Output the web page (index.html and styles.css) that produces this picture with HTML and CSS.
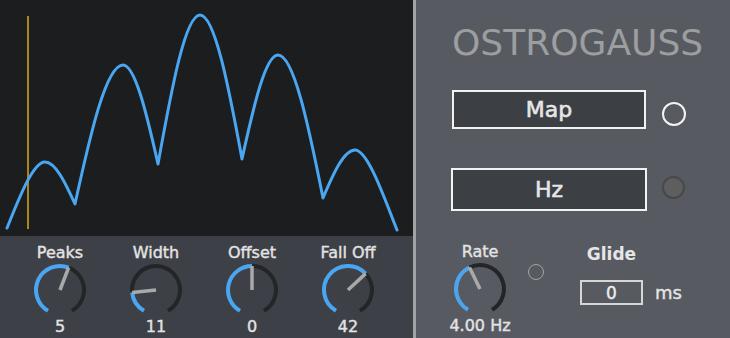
FILE: index.html
```html
<!DOCTYPE html>
<html lang="en">
<head>
    <meta charset="UTF-8">
    <meta name="viewport" content="width=device-width, initial-scale=1.0">
    <title>Ostrogauss</title>
    <link rel="stylesheet" href="styles.css">
</head>
<body>
    <div class="device">
        <div class="left">
            <!-- Gaussian peaks display -->
            <div class="scope">
                <svg width="413" height="236" viewBox="0 0 413 236">
                    <line class="playhead" x1="28" y1="16" x2="28" y2="229"/>
                    <path class="curve" d="M7 228
                        C19 198 33 162 45 162
                        C55.5 162 65.2 182.6 75 204
                        C90.6 133 106.2 65 123 65
                        C135 65 146.6 113.5 158 164
                        C171.7 88 185.3 15 200 15
                        C214.7 15 228.4 85.6 242 159
                        C253.7 106 265.4 55 278 55
                        C293.7 55 308.4 125 323 198
                        C333.4 173.5 343.8 150 355 150
                        C368 150 385 200 397 230"/>
                </svg>
            </div>

            <div class="dials">
                <div class="knob">
                    <span class="knob-label">Peaks</span>
                    <svg viewBox="0 0 56 56">
                        <path class="dial-track" d="M36.60 5.59 A24 24 0 0 1 40 48.78"/>
                        <path class="dial-value" d="M16 48.78 A24 24 0 0 1 36.60 5.59"/>
                        <line class="dial-needle" x1="28" y1="28" x2="36.60" y2="5.59"/>
                    </svg>
                    <span class="knob-value">5</span>
                </div>
                <div class="knob">
                    <span class="knob-label">Width</span>
                    <svg viewBox="0 0 56 56">
                        <path class="dial-track" d="M4.13 30.51 A24 24 0 1 1 40 48.78"/>
                        <path class="dial-value" d="M16 48.78 A24 24 0 0 1 4.13 30.51"/>
                        <line class="dial-needle" x1="28" y1="28" x2="4.13" y2="30.51"/>
                    </svg>
                    <span class="knob-value">11</span>
                </div>
                <div class="knob">
                    <span class="knob-label">Offset</span>
                    <svg viewBox="0 0 56 56">
                        <path class="dial-track" d="M28 4 A24 24 0 0 1 40 48.78"/>
                        <path class="dial-value" d="M16 48.78 A24 24 0 0 1 28 4"/>
                        <line class="dial-needle" x1="28" y1="28" x2="28" y2="4"/>
                    </svg>
                    <span class="knob-value">0</span>
                </div>
                <div class="knob">
                    <span class="knob-label">Fall Off</span>
                    <svg viewBox="0 0 56 56">
                        <path class="dial-track" d="M45.55 11.63 A24 24 0 0 1 40 48.78"/>
                        <path class="dial-value" d="M16 48.78 A24 24 0 1 1 45.55 11.63"/>
                        <line class="dial-needle" x1="28" y1="28" x2="45.55" y2="11.63"/>
                    </svg>
                    <span class="knob-value">42</span>
                </div>
            </div>
        </div>

        <div class="divider"></div>

        <div class="right">
            <h1 class="title">OSTROGAUSS</h1>

            <div class="row row-map">
                <div class="btn btn-map">Map</div>
                <span class="led led-on"></span>
            </div>

            <div class="row row-hz">
                <div class="btn btn-hz">Hz</div>
                <span class="led led-off"></span>
            </div>

            <div class="controls">
                <div class="knob rate">
                    <span class="knob-label">Rate</span>
                    <svg viewBox="0 0 56 56">
                        <path class="dial-track" d="M17.48 6.43 A24 24 0 0 1 40 48.78"/>
                        <path class="dial-value" d="M16 48.78 A24 24 0 0 1 17.48 6.43"/>
                        <line class="dial-needle" x1="28" y1="28" x2="17.48" y2="6.43"/>
                    </svg>
                    <span class="knob-value">4.00 Hz</span>
                </div>
                <span class="led-small"></span>
                <div class="glide">
                    <div class="glide-label">Glide</div>
                    <div class="glide-row">
                        <div class="glide-box">0</div>
                        <span class="glide-unit">ms</span>
                    </div>
                </div>
            </div>
        </div>
    </div>
</body>
</html>
```

FILE: styles.css
```css
/* Device layout */
body {
    margin: 0;
    background-color: #575a61;
    font-family: "DejaVu Sans", "Liberation Sans", sans-serif;
}

.device {
    display: flex;
    width: 730px;
    height: 338px;
    overflow: hidden;
}

.left {
    width: 413px;
    display: flex;
    flex-direction: column;
}

.scope {
    height: 236px;
    background-color: #1b1d1f;
}

.scope svg {
    display: block;
}

.curve {
    fill: none;
    stroke: #4ba6f2;
    stroke-width: 3;
    stroke-linejoin: round;
    stroke-linecap: round;
}

.playhead {
    stroke: #d9a91e;
    stroke-width: 1.5;
}

.divider {
    width: 3px;
    background-color: #a2a3a5;
}

/* Dials */
.dials {
    flex: 1;
    display: flex;
    gap: 16px;
    padding: 8px 0 0 20px;
    background-color: #3d4046;
}

.knob {
    width: 80px;
    display: flex;
    flex-direction: column;
    align-items: center;
    color: #e3e3e3;
    font-size: 16px;
    line-height: 18px;
    white-space: nowrap;
    -webkit-text-stroke: 0.4px currentColor;
}

.knob svg {
    display: block;
    width: 56px;
    height: 56px;
}

.dial-track,
.dial-value {
    fill: none;
    stroke-width: 4;
}

.dial-track {
    stroke: #232527;
}

.dial-value {
    stroke: #4ba6f2;
}

.dial-needle {
    stroke: #a9a9a9;
    stroke-width: 3.5;
}

/* Right panel */
.right {
    flex: 1;
    padding: 22px 0 0 36px;
    background-color: #575a61;
}

.title {
    margin: 0;
    font-size: 36px;
    line-height: 42px;
    font-weight: normal;
    color: #9c9ea0;
}

.row {
    display: flex;
    align-items: flex-start;
}

.row-map {
    margin-top: 26px;
}

.row-hz {
    margin-top: 39px;
}

.btn {
    box-sizing: border-box;
    display: flex;
    align-items: center;
    justify-content: center;
    border: 2px solid #f2f2f2;
    background-color: #3c3f44;
    color: #e6e6e6;
    font-size: 22px;
    -webkit-text-stroke: 0.6px currentColor;
}

.btn-map {
    width: 194px;
    height: 39px;
}

.btn-hz {
    width: 196px;
    height: 43px;
    margin-left: -1px;
}

.led {
    box-sizing: border-box;
    border-radius: 50%;
}

.led-on {
    width: 24px;
    height: 24px;
    margin: 12px 0 0 16px;
    border: 2px solid #f4f4f4;
}

.led-off {
    width: 23px;
    height: 23px;
    margin: 8px 0 0 15px;
    border: 2px solid #46484b;
    background-color: #5e5e5f;
}

.controls {
    display: flex;
    align-items: flex-start;
    margin-top: 32px;
}

.rate {
    margin-left: -12px;
}

.led-small {
    box-sizing: border-box;
    width: 16px;
    height: 16px;
    margin: 21px 0 0 8px;
    border: 1.5px solid #a3a3a3;
    border-radius: 50%;
}

.glide {
    margin: 2px 0 0 36px;
}

.glide-label {
    width: 63px;
    text-align: center;
    font-size: 17px;
    line-height: 18px;
    font-weight: bold;
    color: #e6e6e6;
}

.glide-row {
    display: flex;
    align-items: center;
    margin-top: 17px;
}

.glide-box {
    box-sizing: border-box;
    display: flex;
    align-items: center;
    justify-content: center;
    width: 63px;
    height: 25px;
    border: 2px solid #d6d6d6;
    color: #eeeeee;
    font-size: 17px;
    -webkit-text-stroke: 0.4px currentColor;
}

.glide-unit {
    margin-left: 12px;
    font-size: 18px;
    color: #e3e3e3;
    -webkit-text-stroke: 0.4px currentColor;
}
```
